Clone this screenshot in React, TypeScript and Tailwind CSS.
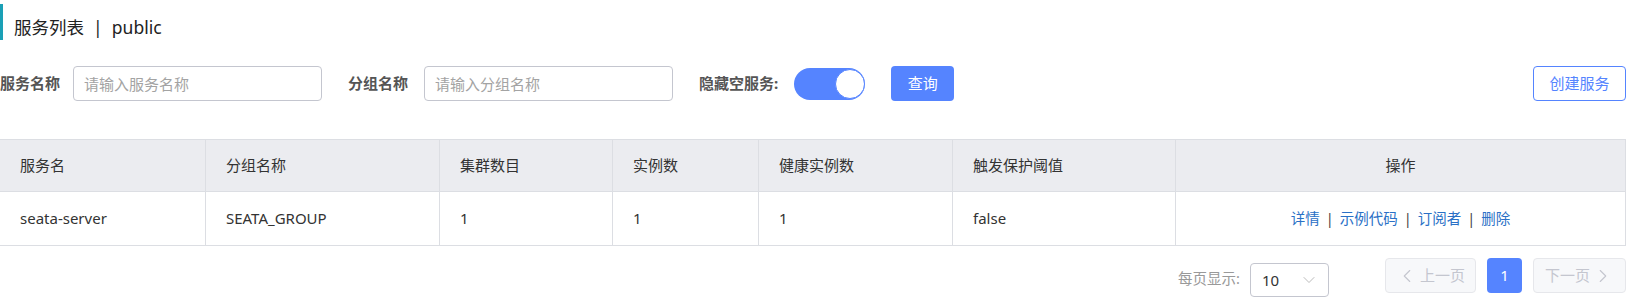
import React, { useState } from 'react';
import { ChevronDown, ChevronLeft, ChevronRight } from 'lucide-react';

const font = { fontFamily: '"Noto Sans", "Noto Sans CJK SC", sans-serif' };

const columns = [
  { title: '服务名', w: 'w-[206px]' },
  { title: '分组名称', w: 'w-[234px]' },
  { title: '集群数目', w: 'w-[173px]' },
  { title: '实例数', w: 'w-[146px]' },
  { title: '健康实例数', w: 'w-[194px]' },
  { title: '触发保护阈值', w: 'w-[223px]' },
];

const rows = [
  { name: 'seata-server', group: 'SEATA_GROUP', clusters: 1, ips: 1, healthy: 1, threshold: 'false' },
];

export default function App() {
  const [hideEmpty, setHideEmpty] = useState(true);

  return (
    <div className="w-[1635px] h-[298px] bg-white overflow-hidden text-[#333]" style={font}>
      {/* 标题 */}
      <div className="mt-[4px] h-[36px] border-l-[3px] border-[#1aa0b6] pl-[11px] pt-[12px]">
        <span className="text-[17.5px] leading-[22px] text-[#222]">服务列表 &nbsp;|&nbsp; public</span>
      </div>

      {/* 查询条件 */}
      <div className="mt-[26px] mr-[9px] flex items-center h-[35px]">
        <label className="text-[15px] font-bold text-[#555] mr-[13px]">服务名称</label>
        <input
          className="w-[249px] h-[35px] rounded-[4px] border border-[#c4c6cf] px-[10px] text-[15px] outline-none placeholder:text-[#a3a3a3]"
          placeholder="请输入服务名称"
        />
        <label className="ml-[26px] text-[15px] font-bold text-[#555] mr-[16px]">分组名称</label>
        <input
          className="w-[249px] h-[35px] rounded-[4px] border border-[#c4c6cf] px-[10px] text-[15px] outline-none placeholder:text-[#a3a3a3]"
          placeholder="请输入分组名称"
        />
        <label className="ml-[26px] text-[15px] font-bold text-[#555] mr-[16px]">隐藏空服务:</label>
        <button
          onClick={() => setHideEmpty(v => !v)}
          className={`relative w-[71px] h-[32px] rounded-full ${hideEmpty ? 'bg-[#5584ff]' : 'bg-[#d5d7dd]'}`}
        >
          <span
            className={`absolute top-[1px] w-[30px] h-[30px] rounded-full bg-white border border-[#5584ff] ${hideEmpty ? 'right-[0px]' : 'left-[1px]'}`}
          />
        </button>
        <button className="ml-[26px] w-[63px] h-[35px] rounded-[4px] bg-[#5584ff] text-white text-[15px]">查询</button>
        <button className="ml-auto w-[93px] h-[35px] rounded-[4px] border border-[#5584ff] text-[#5584ff] text-[15px]">
          创建服务
        </button>
      </div>

      {/* 表格 */}
      <div className="mt-[38px] -ml-[1px] mr-[9px] border border-[#dcdee3] text-[15px]">
        <div className="flex h-[52px] bg-[#ebecf0] border-b border-[#dcdee3]">
          {columns.map(c => (
            <div key={c.title} className={`${c.w} shrink-0 flex items-center pl-[20px] border-r border-[#dcdee3]`}>
              {c.title}
            </div>
          ))}
          <div className="flex-1 flex items-center justify-center">操作</div>
        </div>
        {rows.map(r => (
          <div key={r.name} className="flex h-[53px]">
            {[r.name, r.group, r.clusters, r.ips, r.healthy, r.threshold].map((v, i) => (
              <div key={i} className={`${columns[i].w} shrink-0 flex items-center pl-[20px] border-r border-[#dcdee3]`}>
                {v}
              </div>
            ))}
            <div className="flex-1 flex items-center justify-center text-[14.5px] text-[#2a70c6]">
              <a className="cursor-pointer">详情</a>
              <span className="mx-[6px] text-[#444]">|</span>
              <a className="cursor-pointer">示例代码</a>
              <span className="mx-[6px] text-[#444]">|</span>
              <a className="cursor-pointer">订阅者</a>
              <span className="mx-[6px] text-[#444]">|</span>
              <a className="cursor-pointer">删除</a>
            </div>
          </div>
        ))}
      </div>

      {/* 分页 */}
      <div className="mt-[12px] mr-[9px] flex justify-end items-start">
        <span className="mt-[10px] text-[14.5px] text-[#999]">每页显示:</span>
        <div className="ml-[10px] mt-[5px] w-[79px] h-[34px] rounded-[4px] border border-[#c4c6cf] flex items-center justify-between pl-[11px] pr-[9px] text-[15px]">
          <span>10</span>
          <ChevronDown className="w-[20px] h-[20px] text-[#b3b3b3]" strokeWidth={1.1} />
        </div>
        <button className="ml-[56px] w-[91px] h-[35px] rounded-[4px] border border-[#e6e7eb] bg-[#f7f8fa] flex items-center justify-center gap-[2px] text-[15px] text-[#c4c6cf]">
          <ChevronLeft className="w-[22px] h-[22px]" strokeWidth={1.2} />
          上一页
        </button>
        <button className="ml-[11px] w-[35px] h-[35px] rounded-[4px] bg-[#5584ff] text-white text-[15px]">1</button>
        <button className="ml-[11px] w-[93px] h-[35px] rounded-[4px] border border-[#e6e7eb] bg-[#f7f8fa] flex items-center justify-center gap-[2px] text-[15px] text-[#c4c6cf]">
          下一页
          <ChevronRight className="w-[22px] h-[22px]" strokeWidth={1.2} />
        </button>
      </div>
    </div>
  );
}
